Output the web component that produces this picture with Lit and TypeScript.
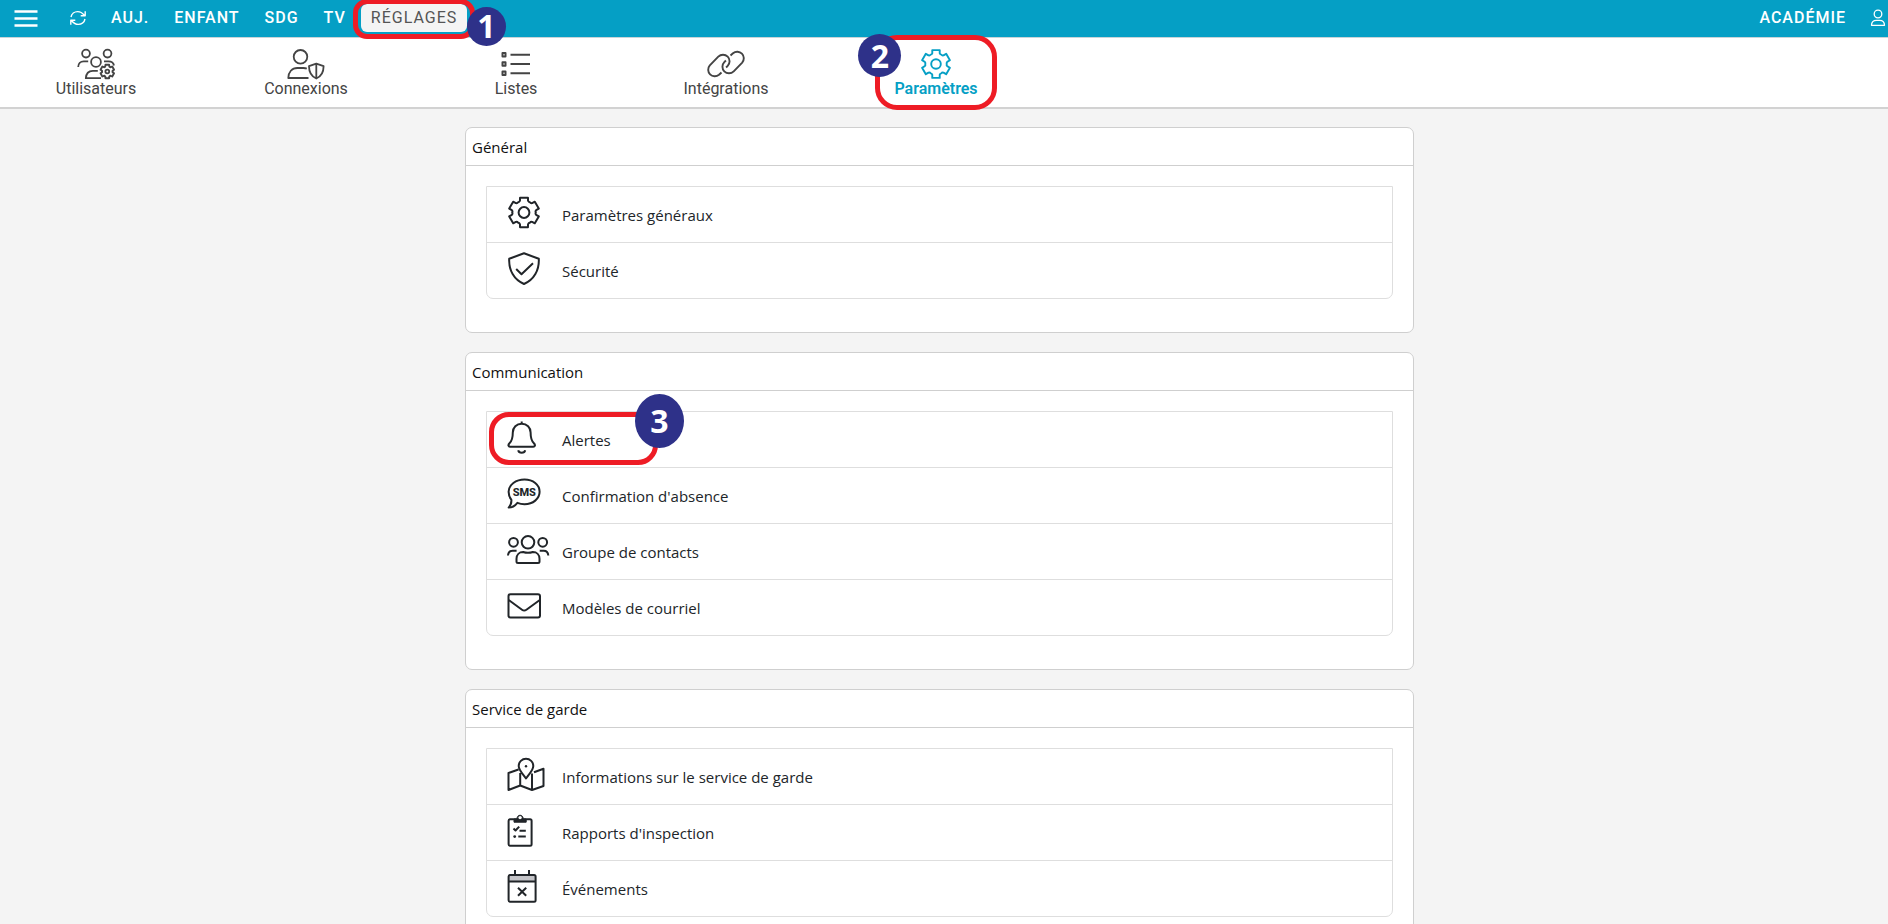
import { LitElement, html, svg, css, type TemplateResult } from "lit";
import { customElement, property } from "lit/decorators.js";

/** Outline of a six-toothed cog centred on (cx, cy). */
function cog(cx: number, cy: number, outer: number, inner: number): string {
  const at = (r: number, deg: number) => {
    const a = (deg * Math.PI) / 180;
    return `${(cx + r * Math.cos(a)).toFixed(2)} ${(cy + r * Math.sin(a)).toFixed(2)}`;
  };
  let d = "";
  for (let i = 0; i < 6; i++) {
    const a = -90 + i * 60;
    d += `${i ? "L" : "M"}${at(outer, a - 15)}L${at(outer, a + 15)}`;
    d += `L${at(inner + 0.6, a + 19)}Q${at(inner - 0.6, a + 24)} ${at(inner, a + 30)}`;
    d += `Q${at(inner - 0.6, a + 36)} ${at(inner + 0.6, a + 41)}`;
  }
  return d + "Z";
}

interface Glyph {
  w: number;
  h: number;
  art: TemplateResult;
}

const link = "M14.5 24.5l-2.5 2.3a6.6 6.6 0 0 1-9.2-9.4l8.5-8.7a6.6 6.6 0 0 1 9.4 0a6.6 6.6 0 0 1 0 9.2l-1.6 1.6";

const glyphs: Record<string, Glyph> = {
  menu: { w: 24, h: 18, art: svg`<path stroke-width="2.6" d="M.5 2.500h23M.5 9.500h23M.5 16.500h23"/>` },
  refresh: {
    w: 18, h: 16,
    art: svg`<path stroke-width="1.4" d="M2 7C2.6 3.8 5.500 1.600 8.600 1.600c2.600 0 4.900 1.400 6.700 3.700M16.200 1.200v4.500h-4.500M16 9c-.6 3.200-3.500 5.400-6.600 5.400-2.600 0-4.900-1.400-6.700-3.700M1.800 14.800v-4.500h4.500"/>`,
  },
  account: {
    w: 16, h: 18,
    art: svg`<circle cx="8" cy="5" r="3.800" stroke-width="1.300"/><path stroke-width="1.300" d="M1.500 16.300c0-3 2-5 5-5h3c3 0 5 2 5 5z"/>`,
  },
  userGear: {
    w: 38, h: 32,
    art: svg`<g stroke-width="1.800"><circle cx="9" cy="5.600" r="3.900"/><circle cx="30.500" cy="5.600" r="3.900"/><circle cx="19" cy="14" r="4.900"/>
      <path d="M1.200 19c0-3.500 2.300-5.700 5.500-5.700h4.500M27 13.300h4.500c3 0 5 1.500 5.500 4.200M24 30.200H8.800c.3-4.500 3-7.400 7-7.400h5"/>
      <path stroke-width="1.900" d="${cog(30.300, 23.500, 7, 5.400)}"/><circle cx="30.300" cy="23.500" r="1.900"/></g>`,
  },
  userShield: {
    w: 38, h: 32,
    art: svg`<g stroke-width="1.800"><circle cx="13.500" cy="8.800" r="6.800"/><path d="M21.500 30H1.300c0-6 3.700-10 9-10h6c1.400 0 2.600.2 3.500.6"/>
      <path d="M29.300 15.600l7.300 2.600c0 5.800-2.500 10.200-7.300 12.300c-4.800-2.100-7.300-6.500-7.300-12.300zM29.300 15.600v14.900"/></g>`,
  },
  list: {
    w: 30, h: 32,
    art: svg`<g stroke-width="2"><path d="M1.500 5h3v3.500h-3zM1.500 14.300h3v3.500h-3zM1.500 23.600h3v3.500h-3z"/><path d="M9.500 6.800H29M9.500 16H29M9.500 25.300H29"/></g>`,
  },
  chain: {
    w: 38, h: 32,
    art: svg`<g stroke-width="1.900"><path d="${link}"/><path transform="rotate(180 19 16)" d="${link}"/></g>`,
  },
  gearNav: {
    w: 30, h: 32,
    art: svg`<g stroke-width="1.900"><path d="${cog(15, 16, 14.400, 10.800)}"/><circle cx="15" cy="16" r="4.800"/></g>`,
  },
  gear: {
    w: 34, h: 32,
    art: svg`<path d="${cog(17, 16.500, 15.300, 11.800)}"/><circle cx="17" cy="16.500" r="5.400"/>`,
  },
  shield: {
    w: 34, h: 32,
    art: svg`<path d="M17 1.300l14.800 5.400c.6 11.500-4.800 21-14.800 25.300C7 27.700 1.600 18.200 2.200 6.700zM9.200 17l5.300 5.300L26 11.300"/>`,
  },
  bell: {
    w: 30, h: 34,
    art: svg`<path d="M14.700.6v2M14.700 2.700c-5.200 0-8.900 3.800-8.900 8.800c0 5.800-.7 8.300-3.300 10.700c-1.900 1.900-1 3.500.7 3.500h23c1.700 0 2.600-1.600.7-3.500c-2.600-2.400-3.300-4.900-3.300-10.700c0-5-3.700-8.800-8.900-8.800zM11.200 29.200c.7 3.300 6.300 3.300 7 0"/>`,
  },
  sms: {
    w: 35, h: 32,
    art: svg`<path d="M17.500 2.500C26 2.500 32.600 7.800 32.600 14.800S26 27.200 17.500 27.200c-2.600 0-5-.5-7.100-1.400C8 28.800 4.800 30.600 1.600 30.600c2-2 3-4.600 2.800-7.800C2.700 20.600 1.600 17.800 1.600 14.800C1.600 7.800 9 2.500 17.500 2.500z"/>
      <text class="sms" x="17.300" y="18.800" text-anchor="middle">SMS</text>`,
  },
  group: {
    w: 43, h: 32,
    art: svg`<circle cx="21" cy="9.300" r="6.300"/><circle cx="6.500" cy="9.300" r="4.400"/><circle cx="35.700" cy="9.300" r="4.400"/>
      <path d="M9.500 28.500v-2.800c0-4 2.800-6.700 6.600-6.700q4.900 1.600 9.800 0c3.800 0 6.600 2.700 6.600 6.700v2.800q0 1.500-1.500 1.500h-20q-1.500 0-1.500-1.500zM1 22.500c.2-3.200 2-4.800 4.600-4.800h4M41.300 22.500c-.2-3.200-2-4.800-4.600-4.800h-4"/>`,
  },
  mail: {
    w: 35, h: 32,
    art: svg`<rect x="1.500" y="5.300" width="31.500" height="23.200" rx="2"/><path d="M1.700 11L15 20.800q2.200 1.600 4.400 0L32.800 11"/>`,
  },
  map: {
    w: 39, h: 34,
    art: svg`<path d="M19 20.500c-3.500-5-7.300-8.500-7.300-12.500a7.300 7.300 0 0 1 14.600 0c0 4-3.800 7.500-7.300 12.500zM11.500 11.500L1.500 15v17l11.700-4.500L25 32l11.500-4V10.700l-9.500 3.500M13.200 15v12.500M25 15.500V32"/><circle cx="19" cy="8.300" r="1.200" fill="currentColor" stroke="none"/>`,
  },
  clipboard: {
    w: 27, h: 34,
    art: svg`<rect x="1.600" y="5.200" width="23" height="26.500" rx="1.500"/><path d="M7 5h3.200a3 3 0 1 1 5.800 0h3.200v3.200H7z" fill="currentColor" stroke-width="1"/><circle cx="13.100" cy="3.600" r="1.700" fill="#fff" stroke="none"/>
      <path d="M6.500 14.500l2 2 3.700-3.900M12.500 16.700h6.300M11.300 22.600h7.500"/><circle cx="7.700" cy="22.600" r="1.400" fill="currentColor" stroke="none"/>`,
  },
  calendar: {
    w: 30, h: 34,
    art: svg`<path d="M2 6h26v6H2z" fill="#c4c4c8" stroke="none"/><path d="M8 0v5M22 0v5"/><rect x="1.600" y="5" width="27" height="26.700" rx="1.500"/><path d="M1.600 11.600h27M11 17.700l8.200 8M19.200 17.700l-8.200 8"/>`,
  },
};

@customElement("line-icon")
export class LineIcon extends LitElement {
  @property() name = "";

  static styles = css`
    :host { display: block; flex: none; }
    .art {
      display: block;
      overflow: visible;
      fill: none;
      stroke: currentColor;
      stroke-width: 2;
      stroke-linecap: butt;
      stroke-linejoin: round;
    }
    .sms {
      font: 800 11px Roboto, sans-serif;
      fill: currentColor;
      stroke: none;
    }
  `;

  render() {
    const g = glyphs[this.name];
    if (!g) return html``;
    return html`<svg class="art" width=${g.w} height=${g.h} viewBox="0 0 ${g.w} ${g.h}" aria-hidden="true">${g.art}</svg>`;
  }
}

interface Row {
  icon: string;
  label: string;
  step?: number;
}

const topLinks = ["AUJ.", "ENFANT", "SDG", "TV", "RÉGLAGES"];

const tabs = [
  { icon: "userGear", label: "Utilisateurs" },
  { icon: "userShield", label: "Connexions" },
  { icon: "list", label: "Listes" },
  { icon: "chain", label: "Intégrations" },
  { icon: "gearNav", label: "Paramètres", active: true },
];

const sections: { title: string; rows: Row[] }[] = [
  {
    title: "Général",
    rows: [
      { icon: "gear", label: "Paramètres généraux" },
      { icon: "shield", label: "Sécurité" },
    ],
  },
  {
    title: "Communication",
    rows: [
      { icon: "bell", label: "Alertes", step: 3 },
      { icon: "sms", label: "Confirmation d'absence" },
      { icon: "group", label: "Groupe de contacts" },
      { icon: "mail", label: "Modèles de courriel" },
    ],
  },
  {
    title: "Service de garde",
    rows: [
      { icon: "map", label: "Informations sur le service de garde" },
      { icon: "clipboard", label: "Rapports d'inspection" },
      { icon: "calendar", label: "Événements" },
    ],
  },
];

@customElement("app-root")
export class AppRoot extends LitElement {
  static styles = css`
    :host {
      display: block;
      min-height: 100vh;
      background: #f4f4f4;
      color: #212529;
      font-family: "Open Sans", "Noto Sans", sans-serif;
      font-size: 15px;
    }
    * { box-sizing: border-box; }
    a { color: inherit; text-decoration: none; }

    .topbar {
      display: flex;
      align-items: center;
      height: 38px;
      padding: 0 2px 2px 14px;
      background: #059fc5;
      border-bottom: 1px solid #c8d4d8;
      color: #fff;
      font: 500 16px/28px Roboto, sans-serif;
      letter-spacing: 1px;
    }
    .icon-button {
      padding: 0;
      border: 0;
      background: none;
      color: inherit;
      cursor: pointer;
    }
    .refresh { margin-left: 31px; }
    .links {
      display: flex;
      gap: 5px;
      margin-left: 14px;
    }
    .link {
      position: relative;
      height: 28px;
      padding: 0 10px;
      border-radius: 6px;
    }
    .link.current {
      background: #f4f4f4;
      color: #555;
      font-weight: 400;
    }
    .school { margin-left: auto; }
    .account { margin-left: 24px; }

    .tabs {
      display: flex;
      gap: 20px;
      height: 71px;
      padding: 10px 1px 0;
      background: #fff;
      border-bottom: 2px solid #d2d2d2;
      font: 400 16px/18px Roboto, sans-serif;
      color: #444;
    }
    .tab {
      display: flex;
      flex-direction: column;
      align-items: center;
      width: 190px;
    }
    .tab.active {
      color: #059fc5;
      font-weight: 600;
    }
    .target { position: relative; display: flex; flex-direction: column; align-items: center; }

    .page {
      display: flex;
      flex-direction: column;
      align-items: center;
      gap: 19px;
      padding: 18px 9px 20px 0;
    }
    .card {
      width: 100%;
      max-width: 949px;
      background: #fff;
      border: 1px solid #cfcfcf;
      border-radius: 7px;
    }
    .title {
      margin: 0;
      padding: 7px 6px 6px;
      border-bottom: 1px solid #cfcfcf;
      color: #111;
      font-size: 15px;
      font-weight: 400;
      line-height: 24px;
    }
    .rows {
      margin: 20px 20px 33px;
      padding: 0;
      list-style: none;
      border: 1px solid #dedede;
      border-radius: 0 0 7px 7px;
    }
    .row + .row { border-top: 1px solid #dedede; }
    .entry {
      position: relative;
      display: grid;
      grid-template-columns: 55px 1fr;
      align-items: start;
      height: 55px;
      padding: 9px 20px 0;
    }
    .text { padding-top: 7px; line-height: 24px; }

    .ring {
      position: absolute;
      border: 5px solid #ee1c25;
      pointer-events: none;
    }
    .badge {
      position: absolute;
      z-index: 2;
      display: flex;
      align-items: center;
      justify-content: center;
      border-radius: 50%;
      background: #2e3189;
      color: #fff;
      font: 700 32px/36px "Open Sans", sans-serif;
      letter-spacing: 0;
    }
    .ring-1 { left: -8px; right: -8px; top: -5px; bottom: -7px; border-radius: 14px; }
    .badge-1 { left: 106px; top: 3px; width: 39px; height: 39px; }
    .ring-2 { left: -19px; right: -19px; top: -13px; bottom: -12px; border-radius: 22px; }
    .badge-2 { left: -36px; top: -14px; width: 43px; height: 43px; }
    .ring-3 { left: 2px; top: 0; width: 169px; height: 53px; border-radius: 20px; }
    .badge-3 { left: 148px; top: -18px; width: 49px; height: 54px; }
  `;

  private mark(step: number) {
    return html`<span class="ring ring-${step}"></span><span class="badge badge-${step}">${step}</span>`;
  }

  render() {
    return html`
      <header class="topbar">
        <button class="icon-button" aria-label="Menu"><line-icon name="menu"></line-icon></button>
        <button class="icon-button refresh" aria-label="Actualiser"><line-icon name="refresh"></line-icon></button>
        <nav class="links">
          ${topLinks.map((label) =>
            label === "RÉGLAGES"
              ? html`<a class="link current" href="#">${label}${this.mark(1)}</a>`
              : html`<a class="link" href="#">${label}</a>`
          )}
        </nav>
        <a class="school" href="#">ACADÉMIE</a>
        <button class="icon-button account" aria-label="Compte"><line-icon name="account"></line-icon></button>
      </header>
      <nav class="tabs">
        ${tabs.map(
          (t) => html`<a class="tab ${t.active ? "active" : ""}" href="#">
            <span class="target">
              <line-icon name=${t.icon}></line-icon>
              <span>${t.label}</span>
              ${t.active ? this.mark(2) : ""}
            </span>
          </a>`
        )}
      </nav>
      <main class="page">
        ${sections.map(
          (s) => html`<section class="card">
            <h2 class="title">${s.title}</h2>
            <ul class="rows">
              ${s.rows.map(
                (r) => html`<li class="row">
                  <a class="entry" href="#">
                    <line-icon name=${r.icon}></line-icon>
                    <span class="text">${r.label}</span>
                    ${r.step ? this.mark(r.step) : ""}
                  </a>
                </li>`
              )}
            </ul>
          </section>`
        )}
      </main>
    `;
  }
}
